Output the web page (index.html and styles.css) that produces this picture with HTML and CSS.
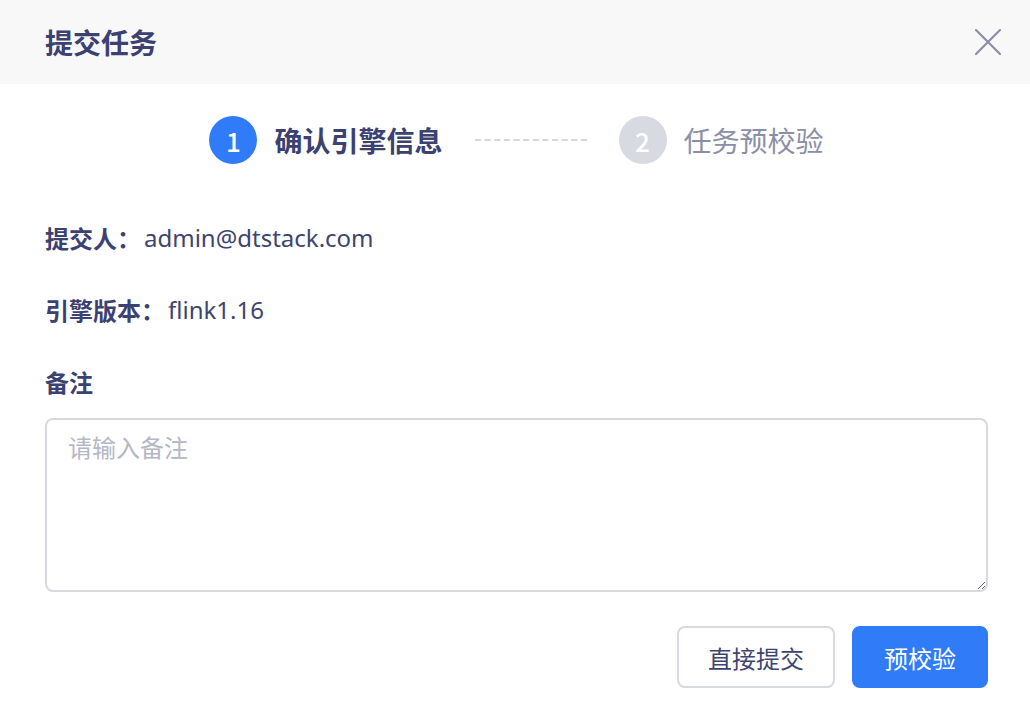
FILE: index.html
```html
<!DOCTYPE html>
<html lang="zh-CN">
<head>
<meta charset="utf-8">
<title>提交任务</title>
<link rel="stylesheet" href="styles.css">
</head>
<body>
<div class="modal">
  <header class="modal-header">
    <h1 class="modal-title">提交任务</h1>
    <button class="close-btn" aria-label="关闭">
      <svg width="26" height="26" viewBox="0 0 26 26"><path d="M1 1 L25 25 M25 1 L1 25" stroke="#8a8ea8" stroke-width="2.2" fill="none" stroke-linecap="round"/></svg>
    </button>
  </header>
  <div class="modal-body">
    <div class="steps">
      <div class="step active">
        <span class="step-num">1</span>
        <span class="step-label">确认引擎信息</span>
      </div>
      <div class="step-line"></div>
      <div class="step">
        <span class="step-num">2</span>
        <span class="step-label">任务预校验</span>
      </div>
    </div>
    <div class="info-row"><span class="info-key">提交人：</span><span class="info-val">admin@dtstack.com</span></div>
    <div class="info-row"><span class="info-key">引擎版本：</span><span class="info-val">flink1.16</span></div>
    <label class="field-label" for="remark">备注</label>
    <textarea id="remark" class="remark" placeholder="请输入备注"></textarea>
    <div class="actions">
      <button class="btn btn-default">直接提交</button>
      <button class="btn btn-primary">预校验</button>
    </div>
  </div>
</div>
</body>
</html>
```
FILE: styles.css
```css
* { box-sizing: border-box; }
html, body {
  margin: 0;
  padding: 0;
  background: #ffffff;
}
body {
  font-family: "Noto Sans", "Noto Sans CJK SC", sans-serif;
  color: #3d4470;
  width: 1030px;
  height: 716px;
  overflow: hidden;
}
.modal {
  width: 1030px;
  height: 716px;
  display: flex;
  flex-direction: column;
}
.modal-header {
  height: 84px;
  background: #f8f8f8;
  display: flex;
  align-items: center;
  justify-content: space-between;
  padding: 0 29px 0 45px;
}
.modal-title {
  margin: 0;
  font-size: 28px;
  font-weight: 700;
  color: #3b4170;
  line-height: 32px;
  font-family: "Noto Sans CJK SC", sans-serif;
}
.close-btn {
  border: 0;
  background: transparent;
  padding: 0;
  width: 26px;
  height: 26px;
  display: flex;
  align-items: center;
  justify-content: center;
  cursor: pointer;
}
.modal-body {
  padding: 32px 42px 0 45px;
  display: flex;
  flex-direction: column;
}
.steps {
  display: flex;
  align-items: center;
  justify-content: center;
  height: 48px;
}
.step {
  display: flex;
  align-items: center;
  gap: 17px;
}
.step-num {
  width: 48px;
  height: 48px;
  border-radius: 50%;
  background: #d8dae1;
  color: #ffffff;
  font-size: 26px;
  font-weight: 500;
  display: flex;
  align-items: center;
  justify-content: center;
  font-family: "Noto Sans CJK SC", sans-serif;
}
.step.active .step-num {
  background: #2f7bf8;
}
.step-label {
  font-size: 28px;
  line-height: 36px;
  color: #8a8ea8;
  font-family: "Noto Sans CJK SC", sans-serif;
}
.step.active .step-label {
  color: #3b4170;
  font-weight: 700;
}
.step-line {
  width: 112px;
  margin: 0 32px;
  height: 0;
  border-top: 2px dashed #d5d7dd;
}
.info-row {
  margin-top: 58px;
  font-size: 24px;
  line-height: 32px;
  height: 32px;
  display: flex;
  align-items: center;
}
.info-row + .info-row {
  margin-top: 40px;
}
.info-key {
  font-family: "Noto Sans CJK SC", sans-serif;
  font-weight: 700;
  color: #3b4170;
  margin-right: 3px;
}
.info-val {
  color: #3d4470;
}
.field-label {
  margin-top: 40px;
  font-size: 24px;
  line-height: 32px;
  font-weight: 700;
  color: #3b4170;
  font-family: "Noto Sans CJK SC", sans-serif;
}
.remark {
  margin-top: 20px;
  width: 943px;
  height: 174px;
  border: 2px solid #d8d9e0;
  border-radius: 8px;
  padding: 11px 21px;
  font-size: 24px;
  line-height: 32px;
  font-family: "Noto Sans CJK SC", sans-serif;
  color: #3d4470;
  resize: vertical;
  outline: none;
}
.remark::placeholder {
  color: #b4b7c6;
}
.actions {
  margin-top: 34px;
  display: flex;
  justify-content: flex-end;
  gap: 17px;
  width: 943px;
}
.btn {
  height: 62px;
  border-radius: 8px;
  font-size: 24px;
  font-family: "Noto Sans CJK SC", sans-serif;
  cursor: pointer;
  padding: 0;
}
.btn-default {
  width: 158px;
  background: #ffffff;
  border: 2px solid #d8dae1;
  color: #3d4470;
}
.btn-primary {
  width: 136px;
  background: #2f7bf8;
  border: 2px solid #2f7bf8;
  color: #ffffff;
}
```
